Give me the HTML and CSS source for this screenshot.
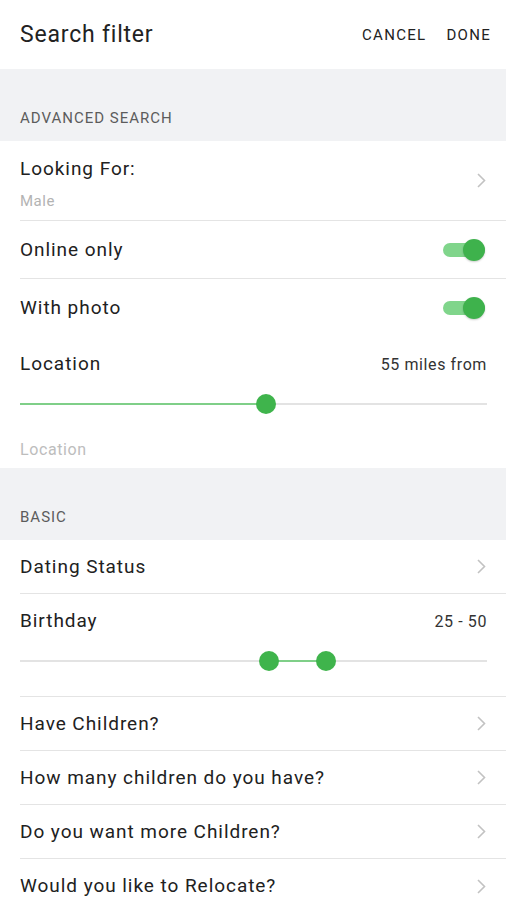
FILE: index.html
```html
<!DOCTYPE html>
<html>
<head>
<meta charset="utf-8">
<title>Search filter</title>
<link rel="stylesheet" href="styles.css">
</head>
<body>
<header class="topbar">
  <h1>Search filter</h1>
  <nav class="actions"><a>CANCEL</a><a>DONE</a></nav>
</header>

<div class="band">ADVANCED SEARCH</div>

<div class="row row-tall">
  <div class="stack">
    <span class="label">Looking For:</span>
    <span class="sub">Male</span>
  </div>
  <svg class="chev" width="9" height="15" viewBox="0 0 9 15"><polyline points="1,1 7.5,7.5 1,14" fill="none" stroke="#c2c2c2" stroke-width="1.6"/></svg>
</div>

<div class="row row-toggle">
  <span class="label">Online only</span>
  <span class="toggle on"><i></i></span>
</div>

<div class="row row-toggle no-line">
  <span class="label">With photo</span>
  <span class="toggle on"><i></i></span>
</div>

<div class="block block-loc">
  <div class="block-head">
    <span class="label">Location</span>
    <span class="value">55 miles from</span>
  </div>
  <div class="slider">
    <div class="track"></div>
    <div class="fill" style="left:0;width:52.7%"></div>
    <span class="thumb" style="left:52.7%"></span>
  </div>
  <div class="placeholder">Location</div>
</div>

<div class="band">BASIC</div>

<div class="row">
  <span class="label">Dating Status</span>
  <svg class="chev" width="9" height="15" viewBox="0 0 9 15"><polyline points="1,1 7.5,7.5 1,14" fill="none" stroke="#c2c2c2" stroke-width="1.6"/></svg>
</div>

<div class="block block-age">
  <div class="block-head">
    <span class="label">Birthday</span>
    <span class="value">25 - 50</span>
  </div>
  <div class="slider">
    <div class="track"></div>
    <div class="fill" style="left:53.3%;width:12.2%"></div>
    <span class="thumb" style="left:53.3%"></span>
    <span class="thumb" style="left:65.5%"></span>
  </div>
</div>

<div class="row">
  <span class="label">Have Children?</span>
  <svg class="chev" width="9" height="15" viewBox="0 0 9 15"><polyline points="1,1 7.5,7.5 1,14" fill="none" stroke="#c2c2c2" stroke-width="1.6"/></svg>
</div>
<div class="row">
  <span class="label">How many children do you have?</span>
  <svg class="chev" width="9" height="15" viewBox="0 0 9 15"><polyline points="1,1 7.5,7.5 1,14" fill="none" stroke="#c2c2c2" stroke-width="1.6"/></svg>
</div>
<div class="row">
  <span class="label">Do you want more Children?</span>
  <svg class="chev" width="9" height="15" viewBox="0 0 9 15"><polyline points="1,1 7.5,7.5 1,14" fill="none" stroke="#c2c2c2" stroke-width="1.6"/></svg>
</div>
<div class="row">
  <span class="label">Would you like to Relocate?</span>
  <svg class="chev" width="9" height="15" viewBox="0 0 9 15"><polyline points="1,1 7.5,7.5 1,14" fill="none" stroke="#c2c2c2" stroke-width="1.6"/></svg>
</div>
</body>
</html>
```

FILE: styles.css
```css
body { margin: 0; font-family: Roboto, "Liberation Sans", sans-serif; color: #212121; background: #fff; }

.topbar { height: 69px; padding: 0 15px 0 20px; display: flex; align-items: center; justify-content: space-between; }
.topbar h1 { margin: 0; font-size: 23px; font-weight: 400; letter-spacing: 0.8px; color: #222; }
.actions { display: flex; gap: 20px; font-size: 15px; letter-spacing: 1.3px; color: #222; }

.band { height: 72px; box-sizing: border-box; padding: 39px 20px 0; background: #f1f2f4; font-size: 15px; line-height: 20px; color: #5c5c5c; letter-spacing: 1px; }

.label { font-size: 19px; line-height: 22px; letter-spacing: 0.95px; }
.value { font-size: 16px; color: #333; letter-spacing: 0.6px; }

.row { height: 54px; box-sizing: border-box; margin-left: 20px; padding-right: 19px; display: flex; align-items: center; justify-content: space-between; border-bottom: 1px solid #e4e4e4; }
.row:last-child { border-bottom: 0; }
.row-tall { height: 80px; }
.row-toggle { height: 58px; }
.no-line { border-bottom: 0; }

.stack { display: flex; flex-direction: column; padding-top: 6px; }
.sub { margin-top: 12px; font-size: 15px; line-height: 18px; letter-spacing: 0.5px; color: #b3b3b3; }
.chev { margin-right: 1px; }

.toggle { position: relative; width: 44px; height: 22px; display: flex; align-items: center; }
.toggle::before { content: ""; width: 42px; height: 14px; border-radius: 7px; background: #80d58b; }
.toggle i { position: absolute; right: 2px; top: 0; width: 22px; height: 22px; border-radius: 50%; background: #3eb24c; box-shadow: 0 1px 2px rgba(0,0,0,0.2); }

.block { margin-left: 20px; padding-right: 19px; border-bottom: 1px solid #e4e4e4; }
.block-head { display: flex; justify-content: space-between; align-items: center; padding-top: 16px; height: 22px; }
.block-loc { height: 131px; box-sizing: border-box; border-bottom: 0; }
.block-age { height: 103px; box-sizing: border-box; }

.slider { position: relative; height: 22px; margin-top: 18px; }
.track { position: absolute; left: 0; right: 0; top: 10px; height: 2px; background: #e3e3e3; }
.fill { position: absolute; top: 10px; height: 2px; background: #7fcf88; }
.thumb { position: absolute; top: 1px; width: 20px; height: 20px; margin-left: -10px; border-radius: 50%; background: #3fb44c; }

.placeholder { margin-top: 25px; font-size: 16px; letter-spacing: 0.6px; color: #bdbdbd; }
```
